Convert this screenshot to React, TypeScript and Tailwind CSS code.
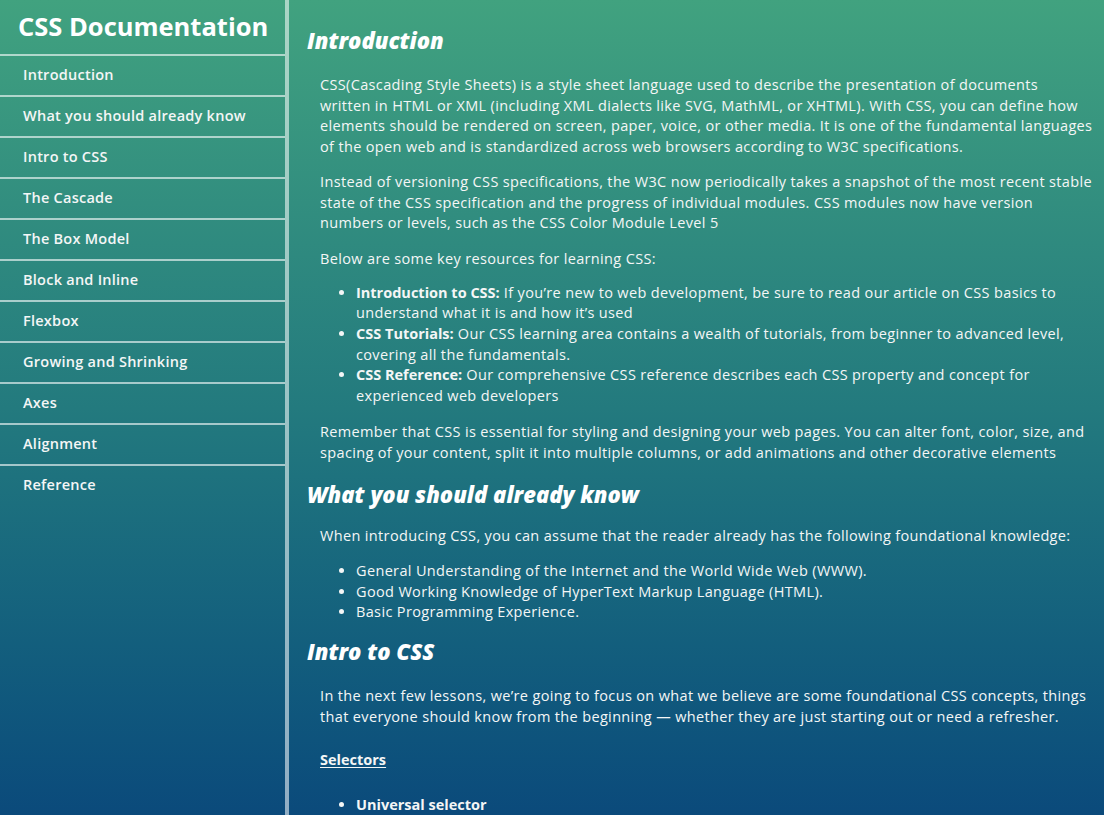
import React from "react";

const nav = [
  "Introduction",
  "What you should already know",
  "Intro to CSS",
  "The Cascade",
  "The Box Model",
  "Block and Inline",
  "Flexbox",
  "Growing and Shrinking",
  "Axes",
  "Alignment",
  "Reference",
];

function Lines({ lines }: { lines: React.ReactNode[] }) {
  return (
    <>
      {lines.map((l, i) => (
        <React.Fragment key={i}>
          {l}
          {i < lines.length - 1 && <br />}
        </React.Fragment>
      ))}
    </>
  );
}

export default function App() {
  return (
    <div
      className="flex h-[815px] w-full overflow-hidden bg-gradient-to-b from-[#41a27f] via-[#237a7e] to-[#0b4a7b] text-[#f4f6f6]"
      style={{ fontFamily: '"Open Sans", "Liberation Sans", sans-serif' }}
    >
      <aside className="w-[289px] shrink-0 border-r-4 border-white/55">
        <div className="flex h-[54px] items-center pl-[18px] text-[25.5px] font-bold leading-none text-white">
          CSS Documentation
        </div>
        <ul>
          {nav.map((n) => (
            <li
              key={n}
              className="flex h-[41px] items-center border-t-2 border-white/60 pb-[2px] pl-[23px] text-[14.5px] font-semibold tracking-[0.25px]"
            >
              {n}
            </li>
          ))}
        </ul>
      </aside>
      <main className="flex-1 pl-[18px] text-[14.5px] leading-[20.7px] tracking-[0.35px]">
        <h2 className="mt-[24px] text-[22px] font-extrabold italic leading-[33px] tracking-normal text-white">
          Introduction
        </h2>
        <div className="pl-[13px]">
          <p className="mt-[18px] whitespace-nowrap">
            <Lines
              lines={[
                "CSS(Cascading Style Sheets) is a style sheet language used to describe the presentation of documents",
                "written in HTML or XML (including XML dialects like SVG, MathML, or XHTML). With CSS, you can define how",
                "elements should be rendered on screen, paper, voice, or other media. It is one of the fundamental languages",
                "of the open web and is standardized across web browsers according to W3C specifications.",
              ]}
            />
          </p>
          <p className="mt-[14px] whitespace-nowrap">
            <Lines
              lines={[
                "Instead of versioning CSS specifications, the W3C now periodically takes a snapshot of the most recent stable",
                "state of the CSS specification and the progress of individual modules. CSS modules now have version",
                "numbers or levels, such as the CSS Color Module Level 5",
              ]}
            />
          </p>
          <p className="mt-[15px]">Below are some key resources for learning CSS:</p>
          <ul className="mt-[13px] list-disc pl-[36px] whitespace-nowrap">
            <li>
              <b className="font-bold tracking-normal">Introduction to CSS:</b> If you’re new to web development, be sure to read our article on CSS basics to
              <br />
              understand what it is and how it’s used
            </li>
            <li>
              <b className="font-bold tracking-normal">CSS Tutorials:</b> Our CSS learning area contains a wealth of tutorials, from beginner to advanced level,
              <br />
              covering all the fundamentals.
            </li>
            <li>
              <b className="font-bold tracking-normal">CSS Reference:</b> Our comprehensive CSS reference describes each CSS property and concept for
              <br />
              experienced web developers
            </li>
          </ul>
          <p className="mt-[15px] whitespace-nowrap">
            <Lines
              lines={[
                "Remember that CSS is essential for styling and designing your web pages. You can alter font, color, size, and",
                "spacing of your content, split it into multiple columns, or add animations and other decorative elements",
              ]}
            />
          </p>
        </div>
        <h2 className="mt-[15px] text-[22px] font-extrabold italic leading-[33px] tracking-normal text-white">
          What you should already know
        </h2>
        <div className="pl-[13px]">
          <p className="mt-[15px]">
            When introducing CSS, you can assume that the reader already has the following foundational knowledge:
          </p>
          <ul className="mt-[14px] list-disc pl-[36px]">
            <li>General Understanding of the Internet and the World Wide Web (WWW).</li>
            <li>Good Working Knowledge of HyperText Markup Language (HTML).</li>
            <li>Basic Programming Experience.</li>
          </ul>
        </div>
        <h2 className="mt-[12px] text-[22px] font-extrabold italic leading-[33px] tracking-normal text-white">
          Intro to CSS
        </h2>
        <div className="pl-[13px]">
          <p className="mt-[18px] whitespace-nowrap">
            <Lines
              lines={[
                "In the next few lessons, we’re going to focus on what we believe are some foundational CSS concepts, things",
                "that everyone should know from the beginning — whether they are just starting out or need a refresher.",
              ]}
            />
          </p>
          <p className="mt-[23px] font-bold tracking-normal underline underline-offset-2">Selectors</p>
          <ul className="mt-[24px] list-disc pl-[36px] font-bold tracking-normal">
            <li>Universal selector</li>
          </ul>
        </div>
      </main>
    </div>
  );
}
